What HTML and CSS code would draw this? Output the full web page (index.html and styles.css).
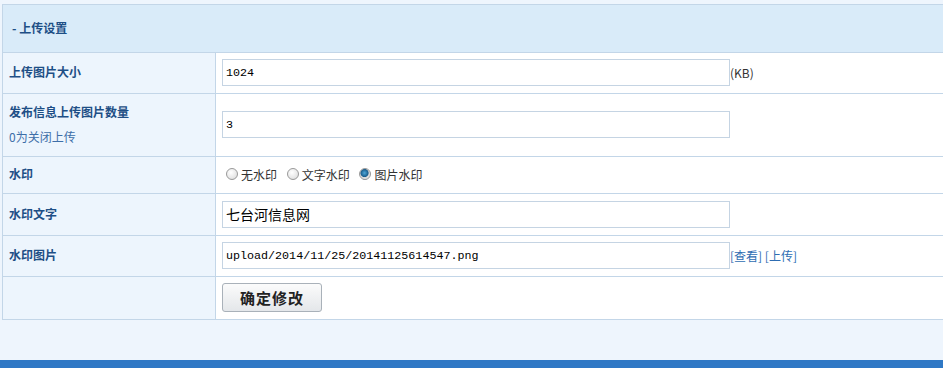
FILE: index.html
```html
<!DOCTYPE html>
<html lang="zh-CN">
<head>
    <meta charset="UTF-8">
    <title>上传设置</title>
    <link rel="stylesheet" href="styles.css">
</head>
<body>
    <div class="wrap">
        <table class="setting">
            <tr class="head">
                <th colspan="2">- 上传设置</th>
            </tr>
            <tr>
                <td class="label">上传图片大小</td>
                <td class="value"><input type="text" class="txt mono" value="1024"><span class="unit">(KB)</span></td>
            </tr>
            <tr class="tall">
                <td class="label">发布信息上传图片数量<br><span class="tip">0为关闭上传</span></td>
                <td class="value"><input type="text" class="txt mono" value="3"></td>
            </tr>
            <tr class="short">
                <td class="label">水印</td>
                <td class="value">
                    <label class="opt"><input type="radio" name="wm"> 无水印</label>
                    <label class="opt"><input type="radio" name="wm"> 文字水印</label>
                    <label class="opt"><input type="radio" name="wm" checked> 图片水印</label>
                </td>
            </tr>
            <tr class="mid">
                <td class="label">水印文字</td>
                <td class="value"><input type="text" class="txt cn" value="七台河信息网"></td>
            </tr>
            <tr>
                <td class="label">水印图片</td>
                <td class="value"><input type="text" class="txt mono" value="upload/2014/11/25/20141125614547.png"><a href="#" class="link">[查看]</a> <a href="#" class="link">[上传]</a></td>
            </tr>
            <tr class="last">
                <td class="label"></td>
                <td class="value"><button type="button" class="btn">确定修改</button></td>
            </tr>
        </table>
    </div>
    <div class="footer"></div>
</body>
</html>
```

FILE: styles.css
```css
* {
    margin: 0;
    padding: 0;
    box-sizing: border-box;
}

body {
    font-family: "Noto Sans CJK SC", "Liberation Sans", sans-serif;
    font-size: 12px;
    color: #333;
    background: #eef5fd;
    overflow: hidden;
}

.wrap {
    padding: 4px 0 0 2px;
    height: 360px;
}

.setting {
    width: 950px;
    border-collapse: collapse;
    background: #fff;
}

.setting th,
.setting td {
    border: 1px solid #c3d6e8;
    text-align: left;
    vertical-align: middle;
}

.head th {
    height: 48px;
    background: #d9ebf9;
    color: #1e4f86;
    font-size: 12px;
    font-weight: bold;
    padding: 0 0 2px 9px;
}

.setting td {
    height: 41px;
    padding: 0 6px 1px;
}

.setting .tall td {
    height: 63px;
}

.setting .short td {
    height: 37px;
}

.setting .mid td {
    height: 42px;
}

.setting .last td {
    height: 43px;
}

.setting .label {
    width: 213px;
    background: #edf5fd;
    color: #1e4f86;
    font-weight: bold;
    line-height: 25px;
    padding-bottom: 3px;
}

.tip {
    font-weight: normal;
    color: #3d6ea8;
}

.value {
    color: #333;
}

.txt {
    width: 508px;
    height: 27px;
    border: 1px solid #c5d4e3;
    padding: 0 3px;
    color: #000;
    vertical-align: middle;
    outline: none;
}

.mono {
    font-family: "Liberation Mono", monospace;
    font-size: 11.7px;
}

.cn {
    font-family: "Noto Sans CJK SC", sans-serif;
    font-size: 14px;
}

.unit {
    vertical-align: middle;
    color: #333;
}

.link {
    color: #2e6db2;
    text-decoration: none;
    vertical-align: middle;
}

.opt {
    display: inline-flex;
    align-items: center;
    gap: 3px;
    margin-right: 3px;
}

.opt input {
    appearance: none;
    width: 12px;
    height: 12px;
    border-radius: 50%;
    border: 1px solid #9a9a9a;
    background: radial-gradient(circle at 40% 35%, #fff 0%, #e4e4e4 70%, #c8c8c8 100%);
    margin-left: 4px;
}

.opt input:checked {
    background: radial-gradient(circle at 45% 40%, #4fa7d8 0%, #1a5e8d 45%, #d8d8d8 55%, #f5f5f5 100%);
}

.btn {
    width: 100px;
    height: 29px;
    border: 1px solid #a9b1b9;
    border-radius: 3px;
    background: linear-gradient(#fbfbfb, #e4e7ea);
    font-family: "Noto Sans CJK SC", sans-serif;
    font-size: 15px;
    font-weight: bold;
    color: #222;
    letter-spacing: 1px;
}

.footer {
    height: 10px;
    background: #2f78c5;
}
```
